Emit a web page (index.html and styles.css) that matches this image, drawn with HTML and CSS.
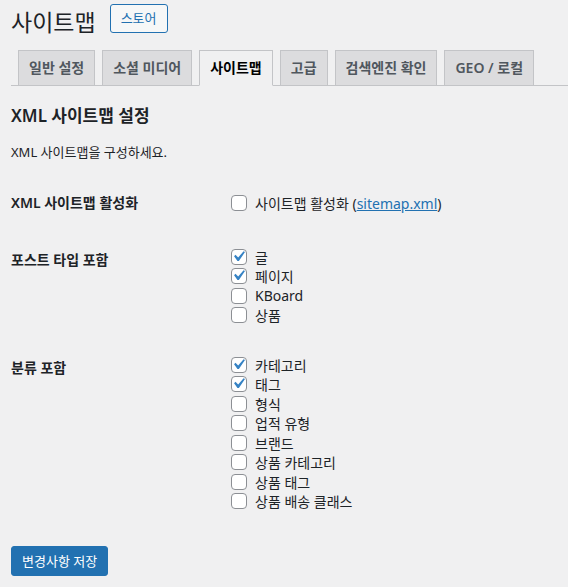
FILE: index.html
```html
<!DOCTYPE html>
<html>

<head>
  <meta charset="UTF-8">
  <meta name="viewport" content="width=device-width, initial-scale=1.0">
  <title>사이트맵</title>
  <link rel="stylesheet" href="styles.css">
</head>

<body>
<div class="wrap">
  <div class="page-head">
    <h1>사이트맵</h1>
    <a class="title-action" href="#">스토어</a>
  </div>

  <nav class="tabs">
    <a class="tab" href="#">일반 설정</a>
    <a class="tab" href="#">소셜 미디어</a>
    <a class="tab active" href="#">사이트맵</a>
    <a class="tab" href="#">고급</a>
    <a class="tab" href="#">검색엔진 확인</a>
    <a class="tab" href="#">GEO / 로컬</a>
  </nav>

  <h2 class="section-title">XML 사이트맵 설정</h2>
  <p class="desc">XML 사이트맵을 구성하세요.</p>

  <div class="form-row row-enable">
    <div class="row-label">XML 사이트맵 활성화</div>
    <div class="options">
      <label class="opt"><span class="box"></span>사이트맵 활성화 (<a class="link" href="#">sitemap.xml</a>)</label>
    </div>
  </div>

  <div class="form-row row-types">
    <div class="row-label shifted">포스트 타입 포함</div>
    <div class="options">
      <label class="opt"><span class="box checked"><svg viewBox="0 0 20 20"><path d="M14.83 4.89l1.34.94-5.81 8.38H9.02L5.78 9.67l1.34-1.25 2.57 2.57z"/></svg></span>글</label>
      <label class="opt"><span class="box checked"><svg viewBox="0 0 20 20"><path d="M14.83 4.89l1.34.94-5.81 8.38H9.02L5.78 9.67l1.34-1.25 2.57 2.57z"/></svg></span>페이지</label>
      <label class="opt"><span class="box"></span>KBoard</label>
      <label class="opt"><span class="box"></span>상품</label>
    </div>
  </div>

  <div class="form-row row-tax">
    <div class="row-label shifted">분류 포함</div>
    <div class="options">
      <label class="opt"><span class="box checked"><svg viewBox="0 0 20 20"><path d="M14.83 4.89l1.34.94-5.81 8.38H9.02L5.78 9.67l1.34-1.25 2.57 2.57z"/></svg></span>카테고리</label>
      <label class="opt"><span class="box checked"><svg viewBox="0 0 20 20"><path d="M14.83 4.89l1.34.94-5.81 8.38H9.02L5.78 9.67l1.34-1.25 2.57 2.57z"/></svg></span>태그</label>
      <label class="opt"><span class="box"></span>형식</label>
      <label class="opt"><span class="box"></span>업적 유형</label>
      <label class="opt"><span class="box"></span>브랜드</label>
      <label class="opt"><span class="box"></span>상품 카테고리</label>
      <label class="opt"><span class="box"></span>상품 태그</label>
      <label class="opt"><span class="box"></span>상품 배송 클래스</label>
    </div>
  </div>

  <button class="save" type="button">변경사항 저장</button>
</div>
</body>

</html>
```

FILE: styles.css
```css
body {
  margin: 0;
  background: #f0f0f1;
  color: #1d2327;
  font-family: "Noto Sans", "Noto Sans CJK KR", sans-serif;
  font-size: 13px;
}

.wrap {
  padding-left: 11px;
}

.page-head {
  display: flex;
  align-items: flex-start;
  padding-top: 4px;
}
.page-head h1 {
  margin: 0;
  font-size: 23px;
  font-weight: 400;
  line-height: 36px;
}
.title-action {
  margin-left: 14px;
  padding: 0 10px;
  line-height: 27px;
  border: 1px solid #2271b1;
  border-radius: 3px;
  background: #f6f7f7;
  color: #2271b1;
  font-size: 13px;
  text-decoration: none;
}

.tabs {
  display: flex;
  align-items: flex-end;
  margin-top: 10px;
  border-bottom: 1px solid #c3c4c7;
}
.tab {
  margin-left: 7px;
  margin-bottom: -1px;
  padding: 5px 10px;
  line-height: 24px;
  border: 1px solid #c3c4c7;
  background: #dcdcde;
  color: #50575e;
  font-size: 14px;
  font-weight: 600;
  text-decoration: none;
  white-space: nowrap;
}
.tab.active {
  background: #f0f0f1;
  border-bottom-color: #f0f0f1;
  color: #000;
}

.section-title {
  margin: 18px 0 0;
  font-size: 17px;
  font-weight: 600;
  line-height: 24px;
}
.desc {
  margin: 14px 0 0;
  line-height: 20px;
}

.form-row {
  display: grid;
  grid-template-columns: 220px 1fr;
}
.row-enable {
  margin-top: 31px;
}
.row-types {
  margin-top: 34px;
}
.row-tax {
  margin-top: 30px;
}
.row-label {
  font-size: 14px;
  font-weight: 600;
  line-height: 20px;
}
.row-label.shifted {
  margin-top: 3px;
}
.row-enable .opt {
  height: 20px;
}

.options {
  display: flex;
  flex-direction: column;
}
.opt {
  display: flex;
  align-items: center;
  height: 19.5px;
  font-size: 14px;
  white-space: nowrap;
}
.box {
  position: relative;
  box-sizing: border-box;
  width: 16px;
  height: 16px;
  margin-right: 8px;
  border: 1px solid #8c8f94;
  border-radius: 4px;
  background: #fff;
  flex: none;
}
.box svg {
  position: absolute;
  left: -4px;
  top: -4px;
  width: 21px;
  height: 21px;
  fill: #3582c4;
}
.link {
  color: #2271b1;
}

.save {
  display: block;
  margin-top: 35px;
  padding: 0 10px;
  height: 30px;
  border: 1px solid #2271b1;
  border-radius: 3px;
  background: #2271b1;
  color: #fff;
  font-family: inherit;
  font-size: 13px;
  line-height: 28px;
}
```
